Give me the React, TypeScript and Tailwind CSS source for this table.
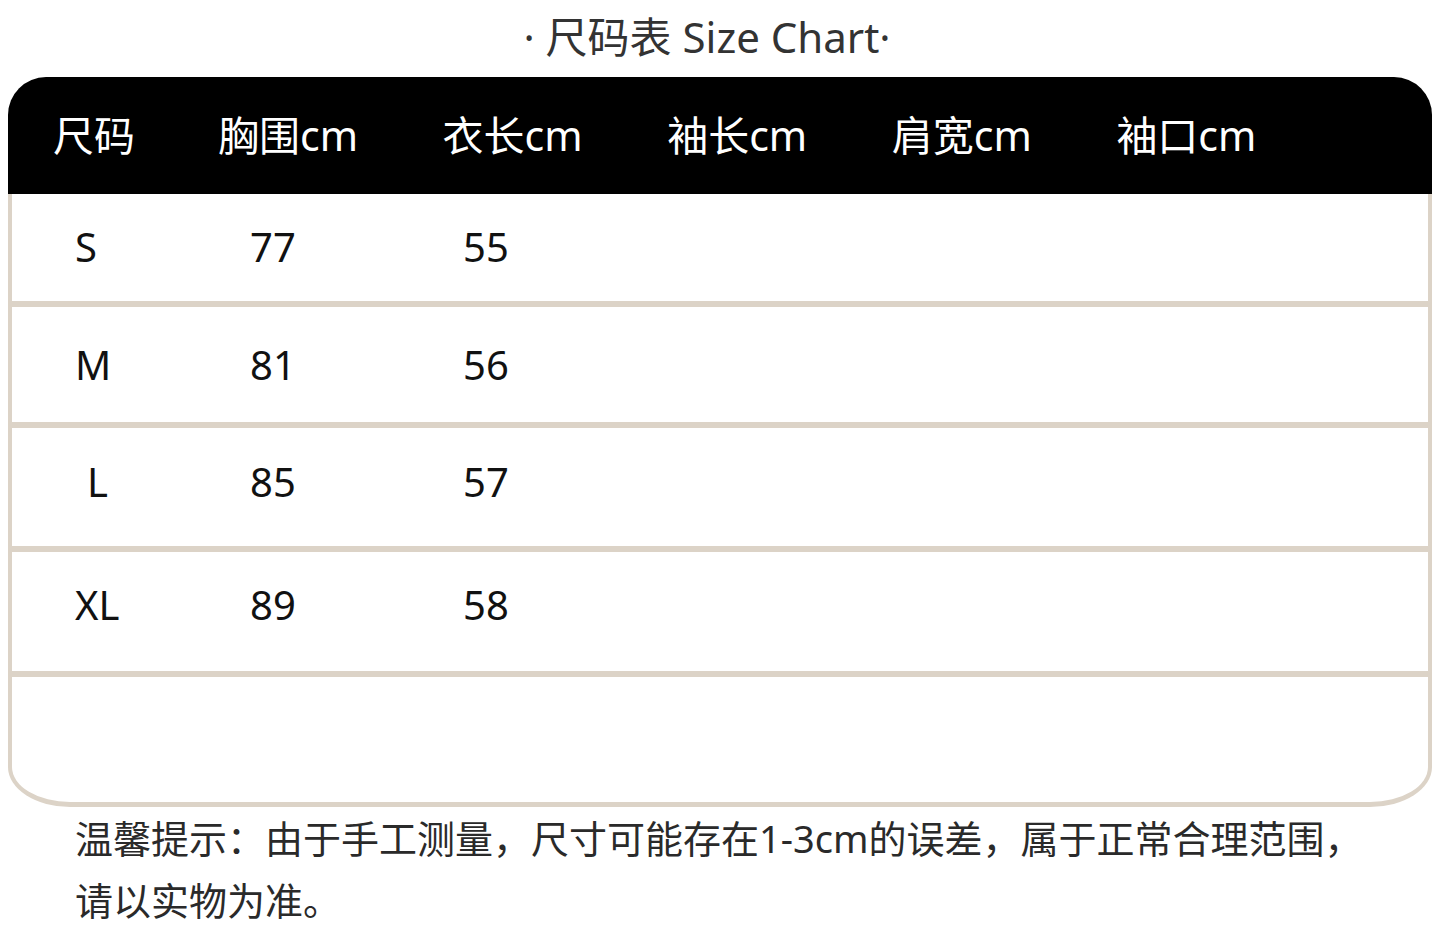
import React from "react";

const rows = [
  { size: "S", chest: "77", length: "55", h: "h-[107px]", pad: "pb-[2px]" },
  { size: "M", chest: "81", length: "56", h: "h-[115px]", pad: "" },
  { size: "L", chest: "85", length: "57", h: "h-[118px]", pad: "pb-[10px]" },
  { size: "XL", chest: "89", length: "58", h: "h-[119px]", pad: "pb-[13px]" },
];

const headers = ["胸围cm", "衣长cm", "袖长cm", "肩宽cm", "袖口cm"];

const font = "font-['Noto_Sans','Noto_Sans_CJK_SC',sans-serif]";

export default function App() {
  return (
    <div className={`w-[1440px] h-[929px] bg-white ${font} overflow-hidden`}>
      {/* title */}
      <div className="h-[77px] flex items-center justify-center text-[42px] text-[#333] leading-none pb-[3px] pr-[26px]">
        ·&nbsp;尺码表 Size Chart·
      </div>

      <div className="mx-[8px]">
        {/* header bar */}
        <div className="h-[117px] bg-black rounded-t-[38px] flex items-center pl-[45px] text-white text-[41px] leading-none">
          <div className="w-[165px]">尺码</div>
          {headers.map((h) => (
            <div key={h} className="w-[224.6px] shrink-0">
              {h}
            </div>
          ))}
        </div>

        {/* body */}
        <div className="border-x-[4px] border-b-[5px] border-[#dcd3c7] rounded-bl-[62px_40px] rounded-br-[62px_40px] bg-white">
          {rows.map((r) => (
            <React.Fragment key={r.size}>
              <div className={`${r.h} ${r.pad} flex items-center pl-[63px] text-[40px] leading-none text-[#111]`}>
                <div className={`w-[175px] ${r.size === "L" ? "pl-[12px]" : ""}`}>{r.size}</div>
                <div className="w-[213px]">{r.chest}</div>
                <div>{r.length}</div>
              </div>
              <div className="h-[6px] bg-[#dcd3c7]" />
            </React.Fragment>
          ))}
          <div className="h-[125px]" />
        </div>
      </div>

      {/* note */}
      <div className="pl-[75px] pr-[40px] text-[38px] leading-[62px] text-[#2a2a2a]">
        <p>温馨提示：由于手工测量，尺寸可能存在1-3cm的误差，属于正常合理范围，</p>
        <p>请以实物为准。</p>
      </div>
    </div>
  );
}
